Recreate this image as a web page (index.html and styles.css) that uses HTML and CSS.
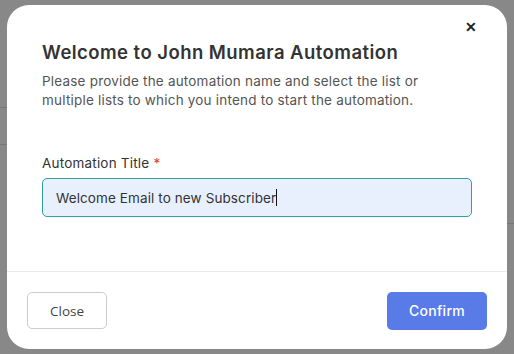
FILE: index.html
```html
<!DOCTYPE html>
<html lang="en">
    <head>
        <meta charset="UTF-8">
        <title>Automation</title>
        <link rel="stylesheet" href="styles.css">
    </head>
    <body>
        <div class="backdrop">
            <div class="line line1"></div>
            <div class="line line2"></div>
            <div class="line line3"></div>

            <div class="modal">
                <div class="modal-body">
                    <button type="button" class="x">&#10005;</button>
                    <h3 class="title">Welcome to John Mumara Automation</h3>
                    <p class="desc">Please provide the automation name and select the list or multiple lists to which you intend to start the automation.</p>

                    <label class="lbl" for="title">Automation Title <span class="req">*</span></label>
                    <div class="field">
                        <span class="val">Welcome Email to new Subscriber</span><span class="caret"></span>
                    </div>
                </div>
                <div class="modal-foot">
                    <button type="button" class="bt-close">Close</button>
                    <button type="button" class="bt-confirm">Confirm</button>
                </div>
            </div>
        </div>
    </body>
</html>
```
FILE: styles.css
```css
body {
    margin: 0;
    font-family: Inter, "Noto Sans", sans-serif;
}

.backdrop {
    position: relative;
    width: 514px;
    height: 354px;
    background-color: #888;
    padding: 5px 7px 5px 7px;
    box-sizing: border-box;
}

/* faint lines of the page behind */
.line {
    position: absolute;
    height: 1px;
    background-color: #777;
}
.line1 { left: 0; top: 107px; width: 8px; }
.line2 { left: 0; top: 144px; width: 8px; }
.line3 { right: 0; top: 223px; width: 8px; }

.modal {
    position: relative;
    height: 344px;
    background-color: #fff;
    border-radius: 22px;
    display: flex;
    flex-direction: column;
}

.modal-body {
    position: relative;
    padding: 36px 35px 0 35px;
    height: 230px;
    border-bottom: 1px solid #e9ecef;
}

.x {
    position: absolute;
    top: 12px;
    right: 28px;
    border: none;
    background: none;
    font-size: 14px;
    font-weight: 900;
    color: #222;
    padding: 2px;
    cursor: pointer;
}

.title {
    margin: 0;
    font-size: 18.5px;
    font-weight: 600;
    color: #333;
    letter-spacing: 0.45px;
}

.desc {
    margin: 9px 0 0 0;
    font-size: 13.5px;
    line-height: 19px;
    color: #555;
    width: 420px;
    letter-spacing: 0.2px;
}

.lbl {
    display: block;
    margin-top: 45px;
    font-size: 13.5px;
    color: #333;
    letter-spacing: 0.2px;
}

.req {
    color: #e53935;
}

.field {
    margin-top: 7px;
    height: 37px;
    border: 1px solid #2ba39a;
    border-radius: 5px;
    background-color: #e8f0fe;
    display: flex;
    align-items: center;
    padding-left: 13px;
    font-size: 13.5px;
    color: #333;
    letter-spacing: 0.1px;
}

.caret {
    display: inline-block;
    width: 1px;
    height: 17px;
    background-color: #111;
}

.modal-foot {
    flex: 1;
    display: flex;
    justify-content: space-between;
    align-items: center;
    padding: 0 20px 0 20px;
}

.bt-close {
    width: 80px;
    height: 37px;
    border: 1px solid #ccc;
    border-radius: 5px;
    background-color: #fff;
    font-family: "Open Sans", sans-serif;
    font-size: 13.5px;
    color: #444;
    cursor: pointer;
}

.bt-confirm {
    width: 100px;
    height: 38px;
    border: none;
    border-radius: 5px;
    background-color: #587be8;
    color: #fff;
    font-family: Inter, sans-serif;
    font-weight: 500;
    font-size: 14px;
    letter-spacing: 0.3px;
    cursor: pointer;
}
```
